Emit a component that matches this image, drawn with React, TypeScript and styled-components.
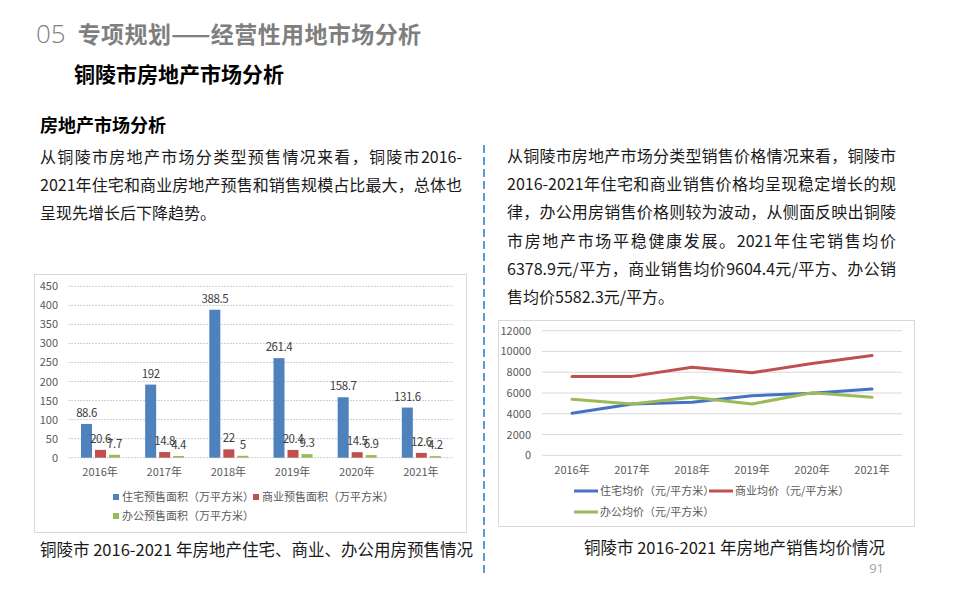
import React from "react";
import styled, { createGlobalStyle } from "styled-components";

const GlobalStyle = createGlobalStyle`
  html, body { margin: 0; padding: 0; background: #ffffff; }
  body { font-family: "Noto Sans CJK SC", "Noto Sans", sans-serif; }
`;

const FONT = `"Noto Sans CJK SC", "Noto Sans", sans-serif`;

const Page = styled.div`
  width: 960px;
  height: 600px;
  overflow: hidden;
  background: #fff;
  font-family: ${FONT};
  color: #1a1a1a;
`;

const Header = styled.div`
  display: flex;
  align-items: center;
  gap: 12px;
  padding: 17px 0 0 36px;
  height: 32px;
`;

const SectionNo = styled.span`
  font-family: "Open Sans", "Noto Sans", sans-serif;
  font-weight: 300;
  font-size: 26px;
  color: #7f7f7f;
  line-height: 32px;
`;

const SectionTitle = styled.span`
  font-weight: 700;
  font-size: 23px;
  color: #7f7f7f;
  line-height: 32px;
  letter-spacing: 0.4px;
`;

const SubTitle = styled.h1`
  margin: 10px 0 0 74px;
  font-size: 21px;
  line-height: 28px;
  font-weight: 700;
  color: #000;
`;

const Main = styled.div`
  display: grid;
  grid-template-columns: 433px 31px 417px;
  padding: 0 0 0 34px;
  margin-top: 25px;
`;

const Column = styled.div`
  display: flex;
  flex-direction: column;
`;

const Heading = styled.h2`
  margin: 0 0 6px 6px;
  font-size: 18px;
  line-height: 24px;
  font-weight: 700;
  color: #000;
`;

const Para = styled.p<{ $indent: number; $width: number; $top?: number }>`
  margin: ${(p) => p.$top ?? 0}px 0 0 ${(p) => p.$indent}px;
  width: ${(p) => p.$width}px;
  font-size: 16px;
  line-height: 28.2px;
  text-align: justify;
  color: #1a1a1a;
`;

const ChartBox = styled.div<{ $w: number; $h: number; $top: number }>`
  margin-top: ${(p) => p.$top}px;
  width: ${(p) => p.$w}px;
  height: ${(p) => p.$h}px;
  box-sizing: border-box;
  border: 1px solid #d9d9d9;
  background: #fff;
  svg { display: block; }
`;

const Caption = styled.div<{ $indent: number; $top: number }>`
  margin: ${(p) => p.$top}px 0 0 ${(p) => p.$indent}px;
  font-size: 16.5px;
  line-height: 22px;
  color: #1a1a1a;
  white-space: nowrap;
`;

const PageNum = styled.div`
  margin-top: 1px;
  padding-right: 31px;
  text-align: right;
  font-family: "Open Sans", "Noto Sans", sans-serif;
  font-size: 13px;
  line-height: 18px;
  color: #a6a6a6;
`;

const Divider = styled.div`
  justify-self: center;
  margin-top: 33px;
  margin-left: 3px;
  width: 2px;
  height: 430px;
  background: repeating-linear-gradient(
    to bottom,
    #5b9bd5 0px,
    #5b9bd5 8px,
    transparent 8px,
    transparent 12px
  );
`;

const AxisText = styled.text`
  font-family: ${FONT};
  font-size: 11px;
  fill: #595959;
`;

const ValueText = styled.text`
  font-family: ${FONT};
  font-size: 11.5px;
  letter-spacing: -0.4px;
  fill: #404040;
`;

const LegendText = styled.text`
  font-family: ${FONT};
  font-size: 11px;
  fill: #595959;
`;

const BLUE = "#4f81bd";
const RED = "#c0504d";
const GREEN = "#9bbb59";

const years = ["2016年", "2017年", "2018年", "2019年", "2020年", "2021年"];

const presale = [
  [88.6, 20.6, 7.7],
  [192, 14.8, 4.4],
  [388.5, 22, 5],
  [261.4, 20.4, 9.3],
  [158.7, 14.5, 6.9],
  [131.6, 12.6, 4.2],
];

const presaleLegend = [
  { name: "住宅预售面积（万平方米）", color: BLUE, x: 78, y: 219 },
  { name: "商业预售面积（万平方米）", color: RED, x: 218, y: 219 },
  { name: "办公预售面积（万平方米）", color: GREEN, x: 78, y: 238 },
];

function BarChart() {
  const W = 431;
  const H = 257;
  const x0 = 33;
  const x1 = 418;
  const yBase = 182.7;
  const yTop = 11.3;
  const scale = (yBase - yTop) / 450;
  const step = (x1 - x0) / 6;
  const ticks = [0, 50, 100, 150, 200, 250, 300, 350, 400, 450];
  const colors = [BLUE, RED, GREEN];
  return (
    <svg width={W} height={H} viewBox={`0 0 ${W} ${H}`}>
      {ticks.map((t) => {
        const y = yBase - t * scale;
        return (
          <g key={t}>
            <line x1={x0} x2={x1} y1={y} y2={y} stroke="#cfcfcf" strokeWidth={1} strokeDasharray="2 1" />
            <AxisText x={23} y={y + 4} textAnchor="end">
              {t}
            </AxisText>
          </g>
        );
      })}
      {presale.map((vals, i) => {
        const cs = x0 + i * step;
        return (
          <g key={i}>
            {vals.map((v, j) => {
              const bx = cs + 13 + j * 14;
              const h = v * scale;
              return (
                <g key={j}>
                  <rect x={bx} y={yBase - h} width={11} height={h} fill={colors[j]} />
                  <ValueText x={bx + 5.5} y={yBase - h - 7} textAnchor="middle">
                    {v}
                  </ValueText>
                </g>
              );
            })}
            <AxisText x={cs + step / 2} y={201} textAnchor="middle">
              {years[i]}
            </AxisText>
          </g>
        );
      })}
      {presaleLegend.map((l) => (
        <g key={l.name}>
          <rect x={l.x} y={l.y} width={6} height={6} fill={l.color} />
          <LegendText x={l.x + 9} y={l.y + 7}>
            {l.name}
          </LegendText>
        </g>
      ))}
    </svg>
  );
}

const priceSeries = [
  { name: "住宅均价（元/平方米）", color: "#4472c4", data: [4050, 4940, 5100, 5740, 5970, 6378.9], lx: 75, ly: 170 },
  { name: "商业均价（元/平方米）", color: RED, data: [7600, 7600, 8470, 7950, 8850, 9604.4], lx: 210, ly: 170 },
  { name: "办公均价（元/平方米）", color: GREEN, data: [5390, 4940, 5600, 4940, 6020, 5582.3], lx: 75, ly: 191 },
];

function LineChart() {
  const W = 415;
  const H = 205;
  const x0 = 43;
  const x1 = 403;
  const yBase = 134.3;
  const yTop = 9.7;
  const scale = (yBase - yTop) / 12000;
  const step = (x1 - x0) / 6;
  const ticks = [0, 2000, 4000, 6000, 8000, 10000, 12000];
  return (
    <svg width={W} height={H} viewBox={`0 0 ${W} ${H}`}>
      {ticks.map((t) => {
        const y = yBase - t * scale;
        return (
          <g key={t}>
            <line x1={x0} x2={x1} y1={y} y2={y} stroke="#d9d9d9" strokeWidth={1} />
            <AxisText x={32} y={y + 4} textAnchor="end">
              {t}
            </AxisText>
          </g>
        );
      })}
      {years.map((yr, i) => (
        <AxisText key={yr} x={x0 + step * (i + 0.5)} y={153} textAnchor="middle">
          {yr}
        </AxisText>
      ))}
      {priceSeries.map((s) => (
        <polyline
          key={s.name}
          fill="none"
          stroke={s.color}
          strokeWidth={3}
          strokeLinejoin="round"
          strokeLinecap="round"
          points={s.data.map((v, i) => `${x0 + step * (i + 0.5)},${yBase - v * scale}`).join(" ")}
        />
      ))}
      {priceSeries.map((s) => (
        <g key={`l-${s.name}`}>
          <line x1={s.lx} x2={s.lx + 24} y1={s.ly} y2={s.ly} stroke={s.color} strokeWidth={3} />
          <LegendText x={s.lx + 26} y={s.ly + 4}>
            {s.name}
          </LegendText>
        </g>
      ))}
    </svg>
  );
}

export default function App() {
  return (
    <>
      <GlobalStyle />
      <Page>
        <Header>
          <SectionNo>05</SectionNo>
          <SectionTitle>专项规划——经营性用地市场分析</SectionTitle>
        </Header>
        <SubTitle>铜陵市房地产市场分析</SubTitle>
        <Main>
          <Column>
            <Heading>房地产市场分析</Heading>
            <Para $indent={6} $width={422}>
              从铜陵市房地产市场分类型预售情况来看，铜陵市2016-2021年住宅和商业房地产预售和销售规模占比最大，总体也呈现先增长后下降趋势。
            </Para>
            <ChartBox $w={433} $h={259} $top={47}>
              <BarChart />
            </ChartBox>
            <Caption $indent={6} $top={5}>
              铜陵市 2016-2021 年房地产住宅、商业、办公用房预售情况
            </Caption>
          </Column>
          <Divider />
          <Column>
            <Para $indent={9} $width={389} $top={29}>
              从铜陵市房地产市场分类型销售价格情况来看，铜陵市2016-2021年住宅和商业销售价格均呈现稳定增长的规律，办公用房销售价格则较为波动，从侧面反映出铜陵市房地产市场平稳健康发展。2021年住宅销售均价6378.9元/平方，商业销售均价9604.4元/平方、办公销售均价5582.3元/平方。
            </Para>
            <ChartBox $w={417} $h={207} $top={10}>
              <LineChart />
            </ChartBox>
            <Caption $indent={86} $top={9}>
              铜陵市 2016-2021 年房地产销售均价情况
            </Caption>
            <PageNum>91</PageNum>
          </Column>
        </Main>
      </Page>
    </>
  );
}
